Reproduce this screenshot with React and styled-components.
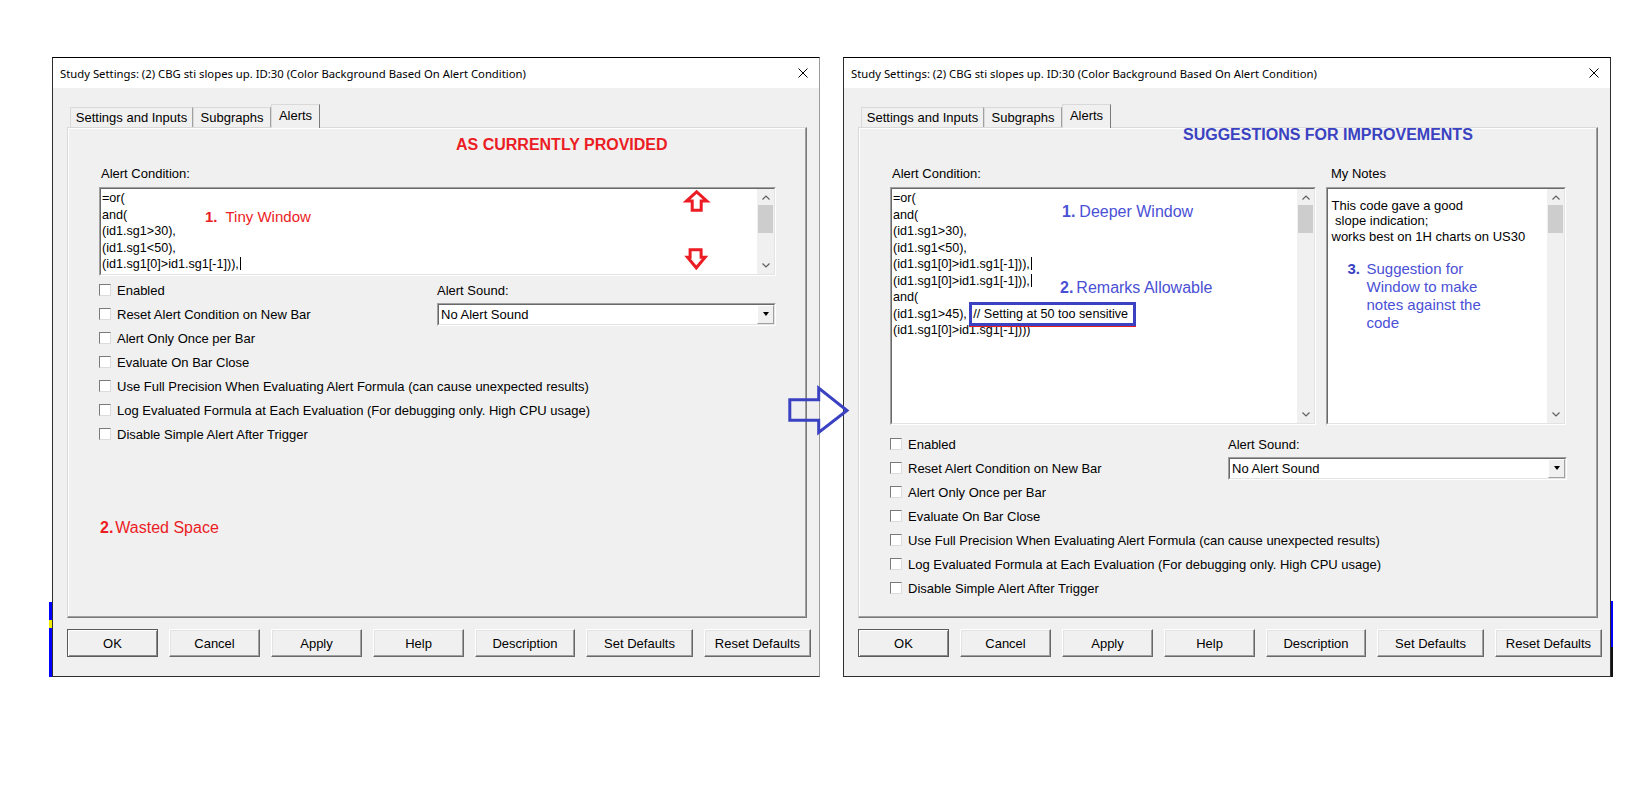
import React from 'react'
import styled, { createGlobalStyle } from 'styled-components'

const RED = '#ec1c24'
const BLUE = '#4a50d5'
const BLUE_DARK = '#3a42c2'
const FACE = '#f0f0f0'

const GlobalStyle = createGlobalStyle`
  html, body {
    margin: 0;
    padding: 0;
    background: #fff;
  }
  body {
    font-family: 'Liberation Sans', Arial, sans-serif;
    color: #000;
  }
`

const Page = styled.div`
  position: relative;
  width: 1652px;
  height: 802px;
  box-sizing: border-box;
  padding: 57px 0 0 49px;
  display: flex;
  gap: 23px;
  align-items: flex-start;
`

const Shot = styled.div`
  display: flex;
  height: 620px;
`

const EdgeStrip = styled.div`
  width: ${p => p.$w}px;
  background: ${p => p.$paint};
`

const Dialog = styled.div`
  width: 768px;
  height: 620px;
  box-sizing: border-box;
  display: flex;
  flex-direction: column;
  background: ${FACE};
  border: 1px solid #2e2e2e;
  border-top-color: #000;
  border-right-color: ${p => p.$edge || '#2e2e2e'};
`

const TitleBar = styled.div`
  height: 30px;
  flex-shrink: 0;
  display: flex;
  align-items: center;
  justify-content: space-between;
  padding: 0 11px 0 7px;
  background: #fff;
`

const TitleText = styled.span`
  font-family: 'Noto Sans', 'Liberation Sans', sans-serif;
  font-size: 11.3px;
  white-space: nowrap;
`

const Body = styled.div`
  flex: 1;
  display: flex;
  flex-direction: column;
  padding: 16px 0 0 14px;
`

const TabRow = styled.div`
  display: flex;
  align-items: flex-end;
  height: 23px;
  padding-left: 3px;
`

const Tab = styled.div`
  position: relative;
  z-index: ${p => (p.$active ? 1 : 0)};
  box-sizing: border-box;
  width: ${p => p.$w}px;
  height: ${p => (p.$active ? 24 : 20)}px;
  margin-bottom: ${p => (p.$active ? -1 : 0)}px;
  padding-bottom: ${p => (p.$active ? 2 : 0)}px;
  display: flex;
  align-items: center;
  justify-content: center;
  font-size: 13px;
  white-space: nowrap;
  background: ${FACE};
  border: 1px solid #d9d9d9;
  border-bottom: none;
  border-right-color: ${p => (p.$active ? '#7a7a7a' : '#a0a0a0')};
`

const Panel = styled.div`
  box-sizing: border-box;
  width: 740px;
  height: 491px;
  padding-left: 31px;
  border: 1px solid;
  border-color: #d9d9d9 #7a7a7a #7a7a7a #d9d9d9;
  box-shadow: inset -1px -1px 0 #a0a0a0, inset 1px 1px 0 #fff;
`

const PanelNote = styled.div`
  height: 38px;
  box-sizing: border-box;
  padding: ${p => p.$top}px 0 0 ${p => p.$indent}px;
  font-size: 16px;
  font-weight: bold;
  line-height: 14px;
  color: ${p => p.$color};
  white-space: nowrap;
`

const LabelRow = styled.div`
  display: grid;
  grid-template-columns: ${p => p.$cols};
  column-gap: 10px;
  height: 15px;
  font-size: 13px;
  line-height: 15px;
`

const FieldLabel = styled.div`
  padding-left: ${p => p.$indent}px;
`

const EditorRow = styled.div`
  display: grid;
  grid-template-columns: ${p => p.$cols};
  column-gap: 10px;
  height: ${p => p.$h}px;
  margin-top: 6px;
`

const Frame = styled.div`
  display: flex;
  min-width: 0;
  box-sizing: border-box;
  background: #fff;
  border: 1px solid;
  border-color: #a0a0a0 #fff #fff #a0a0a0;
`

const FrameInner = styled.div`
  flex: 1;
  display: flex;
  min-width: 0;
  border: 1px solid;
  border-color: #696969 #e3e3e3 #e3e3e3 #696969;
`

const CodeArea = styled.div`
  position: relative;
  flex: 1;
  min-width: 0;
  padding: 1px;
  font-size: 12.6px;
  line-height: 16.5px;
  white-space: pre;
  overflow: hidden;
`

const Caret = styled.span`
  display: inline-block;
  width: 1px;
  height: 13px;
  margin-left: 1px;
  vertical-align: -2px;
  background: #000;
`

const Remark = styled.span`
  position: relative;
  margin-left: -1px;
  padding: 2px 5px 2px 1px;
  border: 3px solid ${BLUE_DARK};
  box-shadow: 0 1px 0 ${RED};
`

const Callout = styled.div`
  position: absolute;
  left: ${p => p.$x}px;
  top: ${p => p.$y}px;
  font-size: ${p => p.$size}px;
  line-height: 18px;
  color: ${p => p.$color};
  white-space: nowrap;
`

const Num = styled.b`
  margin-right: ${p => p.$gap}px;
`

const Overlay = styled.svg`
  position: absolute;
  left: ${p => p.$x}px;
  top: ${p => p.$y}px;
  overflow: visible;
`

const ScrollTrack = styled.div`
  width: 17px;
  flex-shrink: 0;
  display: flex;
  flex-direction: column;
  background: ${FACE};
`

const ScrollButton = styled.div`
  height: 17px;
  display: flex;
  align-items: center;
  justify-content: center;
`

const Thumb = styled.div`
  height: 28px;
  margin: -1px 1px 0;
  background: #cdcdcd;
`

const ScrollFill = styled.div`
  flex: 1;
`

const NotesArea = styled.div`
  flex: 1;
  padding: 9px 0 0 3.5px;
  font-size: 13px;
  line-height: 15.3px;
  white-space: pre;
  overflow: hidden;
`

const Suggestion = styled.div`
  display: flex;
  margin-top: 16px;
  padding-left: 16px;
  font-size: 15px;
  line-height: 18px;
  color: ${BLUE};
  white-space: normal;
`

const SuggestionNum = styled.b`
  width: 19px;
  flex-shrink: 0;
  color: ${BLUE_DARK};
`

const OptionsGrid = styled.div`
  display: grid;
  grid-template-columns: 338px 339px;
  grid-auto-rows: 24px;
  margin-top: ${p => p.$gap}px;
  font-size: 13px;
`

const CheckRow = styled.div`
  grid-column: 1;
  display: flex;
  align-items: center;
  white-space: nowrap;
`

const CheckBox = styled.span`
  width: 12px;
  height: 12px;
  flex-shrink: 0;
  box-sizing: border-box;
  margin-right: 6px;
  background: #fff;
  border: 1px solid;
  border-color: #7a7a7a #dcdcdc #dcdcdc #7a7a7a;
`

const SoundLabel = styled.div`
  grid-column: 2;
  grid-row: 1;
  align-self: center;
`

const Select = styled(Frame)`
  grid-column: 2;
  grid-row: 2;
  align-self: center;
  height: 23px;
`

const SelectText = styled.div`
  flex: 1;
  display: flex;
  align-items: center;
  padding-left: 2px;
`

const DropButton = styled.div`
  width: 17px;
  box-sizing: border-box;
  display: flex;
  align-items: center;
  justify-content: center;
  background: ${FACE};
  border: 1px solid;
  border-color: #fff #a0a0a0 #a0a0a0 #fff;
`

const DropTriangle = styled.span`
  width: 0;
  height: 0;
  border-left: 3.5px solid transparent;
  border-right: 3.5px solid transparent;
  border-top: 4px solid #000;
`

const BottomNote = styled.div`
  margin-top: 73px;
  padding-left: 1px;
  font-size: 16px;
  line-height: 18px;
  color: ${RED};
`

const ButtonRow = styled.div`
  display: flex;
  gap: 11px;
  margin-top: 11px;
`

const Button = styled.div`
  width: ${p => p.$w}px;
  height: 28px;
  box-sizing: border-box;
  display: flex;
  align-items: center;
  justify-content: center;
  font-size: 13px;
  background: ${FACE};
  border: 1px solid;
  border-color: ${p => (p.$default ? '#5a5a5a' : '#fff #696969 #696969 #fff')};
  box-shadow: ${p =>
    p.$default
      ? 'inset 1px 1px 0 #fff, inset -1px -1px 0 #8a8a8a'
      : 'inset -1px -1px 0 #a0a0a0, inset 1px 1px 0 #e3e3e3'};
`

const BUTTONS = [
  { label: 'OK', w: 91, def: true },
  { label: 'Cancel', w: 91 },
  { label: 'Apply', w: 91 },
  { label: 'Help', w: 91 },
  { label: 'Description', w: 100 },
  { label: 'Set Defaults', w: 107 },
  { label: 'Reset Defaults', w: 107 }
]

const OPTIONS = [
  'Enabled',
  'Reset Alert Condition on New Bar',
  'Alert Only Once per Bar',
  'Evaluate On Bar Close',
  'Use Full Precision When Evaluating Alert Formula (can cause unexpected results)',
  'Log Evaluated Formula at Each Evaluation (For debugging only. High CPU usage)',
  'Disable Simple Alert After Trigger'
]

const LEFT_CODE = ['=or(', 'and(', '(id1.sg1>30),', '(id1.sg1<50),', '(id1.sg1[0]>id1.sg1[-1])),']

const CloseIcon = () => (
  <svg width="10" height="10" viewBox="0 0 10 10">
    <path d="M0.5 0.5L9.5 9.5M9.5 0.5L0.5 9.5" stroke="#000" strokeWidth="1" fill="none" />
  </svg>
)

const Chevron = ({ down }) => (
  <svg width="8" height="5" viewBox="0 0 8 5">
    <polyline
      points={down ? '0.5,0.5 4,4 7.5,0.5' : '0.5,4.5 4,1 7.5,4.5'}
      stroke="#606060"
      strokeWidth="1.2"
      fill="none"
    />
  </svg>
)

const Scrollbar = () => (
  <ScrollTrack>
    <ScrollButton>
      <Chevron />
    </ScrollButton>
    <Thumb />
    <ScrollFill />
    <ScrollButton>
      <Chevron down />
    </ScrollButton>
  </ScrollTrack>
)

const StudyDialog = ({ edge, children }) => (
  <Dialog $edge={edge}>
    <TitleBar>
      <TitleText>
        Study Settings: (2) CBG sti slopes up. ID:30 (Color Background Based On Alert Condition)
      </TitleText>
      <CloseIcon />
    </TitleBar>
    <Body>
      <TabRow>
        <Tab $w={123}>Settings and Inputs</Tab>
        <Tab $w={78}>Subgraphs</Tab>
        <Tab $w={49} $active>
          Alerts
        </Tab>
      </TabRow>
      <Panel>{children}</Panel>
      <ButtonRow>
        {BUTTONS.map(b => (
          <Button key={b.label} $w={b.w} $default={b.def}>
            {b.label}
          </Button>
        ))}
      </ButtonRow>
    </Body>
  </Dialog>
)

const Options = ({ gap }) => (
  <OptionsGrid $gap={gap}>
    {OPTIONS.map(o => (
      <CheckRow key={o}>
        <CheckBox />
        {o}
      </CheckRow>
    ))}
    <SoundLabel>Alert Sound:</SoundLabel>
    <Select>
      <FrameInner>
        <SelectText>No Alert Sound</SelectText>
        <DropButton>
          <DropTriangle />
        </DropButton>
      </FrameInner>
    </Select>
  </OptionsGrid>
)

const CurrentPanel = () => (
  <>
    <PanelNote $top={10} $indent={357} $color={RED}>
      AS CURRENTLY PROVIDED
    </PanelNote>
    <LabelRow $cols="677px">
      <FieldLabel $indent={2}>Alert Condition:</FieldLabel>
    </LabelRow>
    <EditorRow $cols="677px" $h={86}>
      <Frame>
        <FrameInner>
          <CodeArea>
            {LEFT_CODE.map((line, i) => (
              <div key={i}>
                {line}
                {i === 4 && <Caret />}
              </div>
            ))}
            <Callout $x={104} $y={19} $size={15} $color={RED}>
              <Num $gap={8}>1.</Num>Tiny Window
            </Callout>
            <Overlay $x={584} $y={1} width="24" height="22" viewBox="0 0 24 22">
              <polygon
                points="11.65,1.8 21.8,11 16.2,11 16.2,20.2 7.2,20.2 7.2,11 1.5,11"
                fill="none"
                stroke={RED}
                strokeWidth="3"
              />
            </Overlay>
            <Overlay $x={585} $y={59} width="21" height="22" viewBox="0 0 21 22">
              <polygon
                points="4.1,1.8 15.1,1.8 15.1,9.3 19.1,9.3 10.3,19.8 1.5,9.3 4.1,9.3"
                fill="none"
                stroke={RED}
                strokeWidth="3"
              />
            </Overlay>
          </CodeArea>
          <Scrollbar />
        </FrameInner>
      </Frame>
    </EditorRow>
    <Options gap={5} />
    <BottomNote>
      <Num $gap={2}>2.</Num>Wasted Space
    </BottomNote>
  </>
)

const SuggestedPanel = () => (
  <>
    <PanelNote $top={0} $indent={293} $color={BLUE_DARK}>
      SUGGESTIONS FOR IMPROVEMENTS
    </PanelNote>
    <LabelRow $cols="426px 240px">
      <FieldLabel $indent={2}>Alert Condition:</FieldLabel>
      <FieldLabel $indent={5}>My Notes</FieldLabel>
    </LabelRow>
    <EditorRow $cols="426px 240px" $h={238}>
      <Frame>
        <FrameInner>
          <CodeArea>
            <div>=or(</div>
            <div>and(</div>
            <div>(id1.sg1&gt;30),</div>
            <div>(id1.sg1&lt;50),</div>
            <div>
              (id1.sg1[0]&gt;id1.sg1[-1])),
              <Caret />
            </div>
            <div>
              (id1.sg1[0]&gt;id1.sg1[-1])),
              <Caret />
            </div>
            <div>and(</div>
            <div>
              (id1.sg1&gt;45), <Remark>// Setting at 50 too sensitive</Remark>
            </div>
            <div>(id1.sg1[0]&gt;id1.sg1[-1])))</div>
            <Callout $x={170} $y={14} $size={16} $color={BLUE}>
              <Num $gap={4}>1.</Num>Deeper Window
            </Callout>
            <Callout $x={168} $y={90} $size={16} $color={BLUE}>
              <Num $gap={3}>2.</Num>Remarks Allowable
            </Callout>
          </CodeArea>
          <Scrollbar />
        </FrameInner>
      </Frame>
      <Frame>
        <FrameInner>
          <NotesArea>
            {'This code gave a good\n slope indication;\nworks best on 1H charts on US30'}
            <Suggestion>
              <SuggestionNum>3.</SuggestionNum>
              <span>
                Suggestion for
                <br />
                Window to make
                <br />
                notes against the
                <br />
                code
              </span>
            </Suggestion>
          </NotesArea>
          <Scrollbar />
        </FrameInner>
      </Frame>
    </EditorRow>
    <Options gap={7} />
  </>
)

const App = () => (
  <>
    <GlobalStyle />
    <Page>
      <Shot>
        <EdgeStrip
          $w={3}
          $paint="linear-gradient(to bottom, transparent 0 545px, #0000ff 545px 563px, #f2ee00 563px 571px, #0000ff 571px)"
        />
        <StudyDialog edge="#9a9a9a">
          <CurrentPanel />
        </StudyDialog>
      </Shot>
      <Shot>
        <StudyDialog>
          <SuggestedPanel />
        </StudyDialog>
        <EdgeStrip
          $w={2}
          $paint="linear-gradient(to bottom, transparent 0 544px, #0000ff 544px 590px, #111 590px)"
        />
      </Shot>
      <Overlay $x={786} $y={385} width="64" height="51" viewBox="0 0 64 51">
        <polygon
          points="3.8,14.8 32.7,14.8 32.7,3 61,25.5 32.7,47.5 32.7,35.2 3.8,35.2"
          fill="none"
          stroke={BLUE_DARK}
          strokeWidth="3"
        />
      </Overlay>
    </Page>
  </>
)

export default App
